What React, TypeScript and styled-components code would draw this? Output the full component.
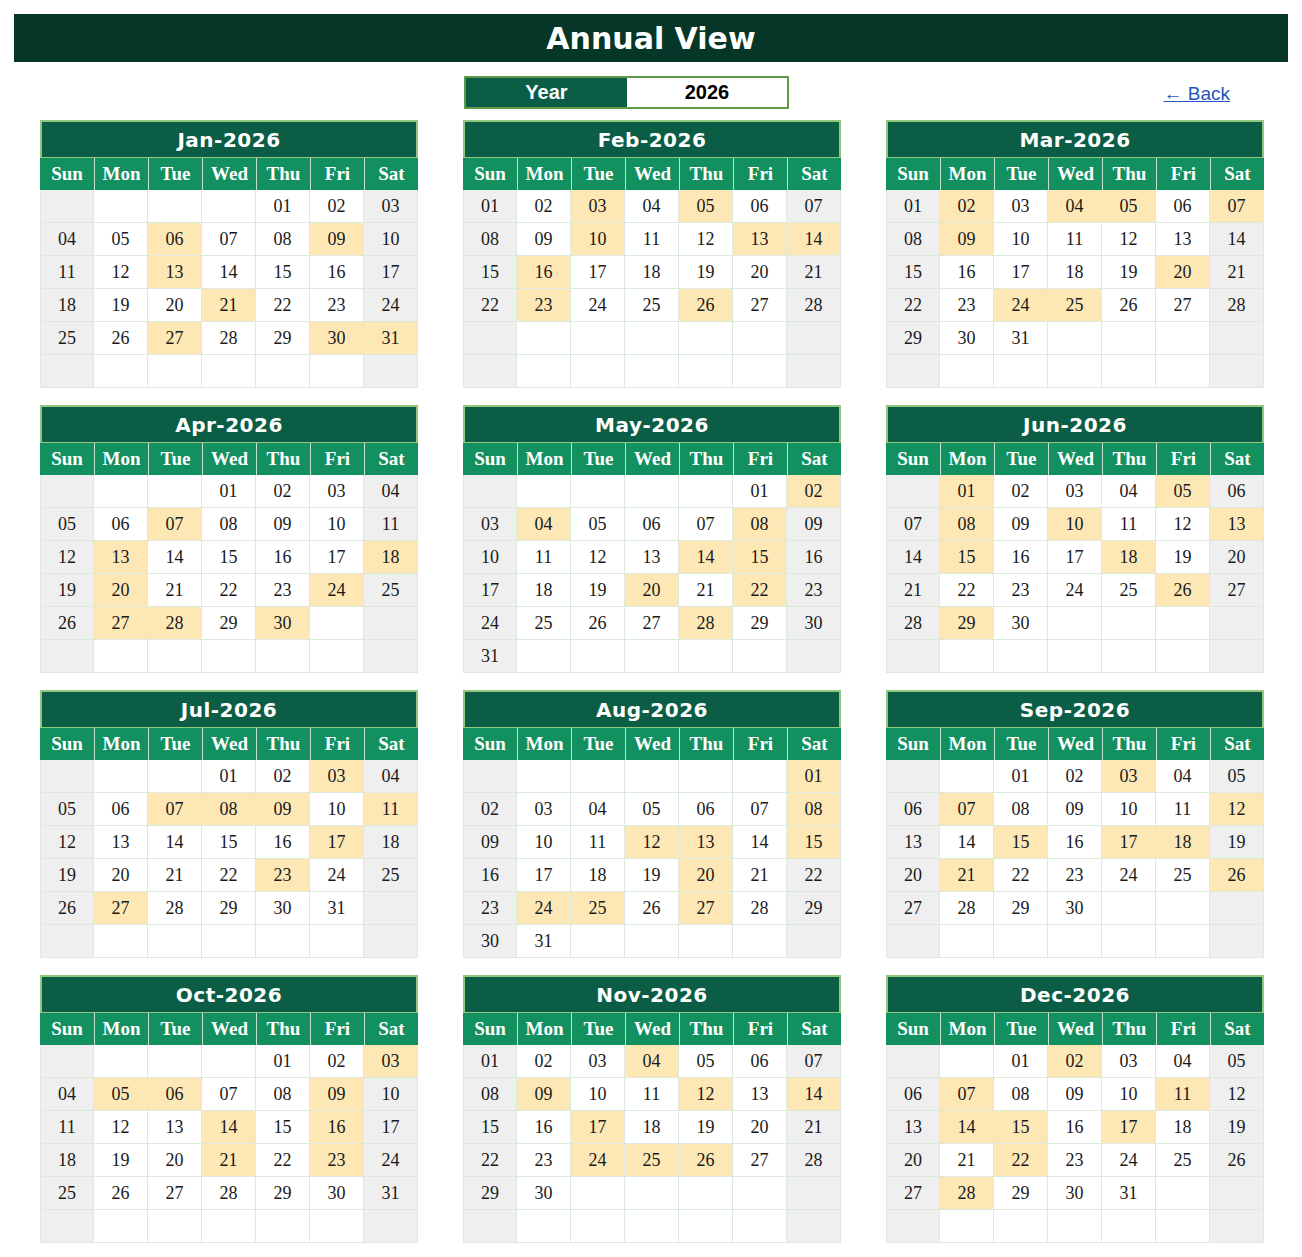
import React from "react";
import styled, { createGlobalStyle } from "styled-components";

const GlobalStyle = createGlobalStyle`
  html, body { margin: 0; padding: 0; background: #ffffff; }
  body { font-family: "Liberation Sans", Arial, sans-serif; }
`;

const Page = styled.div`
  width: 1302px;
  padding: 14px 0 0 0;
  box-sizing: border-box;
`;

const TitleBar = styled.header`
  margin: 0 14px;
  height: 48px;
  background: #053628;
  color: #ffffff;
  display: flex;
  align-items: center;
  justify-content: center;
  font-family: "DejaVu Sans", Verdana, sans-serif;
  font-weight: bold;
  font-size: 30px;
`;

const ControlRow = styled.div`
  position: relative;
  height: 58px;
  display: flex;
  align-items: center;
  padding-left: 464px;
`;

const YearBox = styled.div`
  display: flex;
  width: 325px;
  height: 33px;
  margin-top: 2px;
  box-sizing: border-box;
  border: 2px solid #5f9a4a;
`;

const YearLabel = styled.div`
  width: 161px;
  background: #0b5e45;
  color: #ffffff;
  display: flex;
  align-items: center;
  justify-content: center;
  font-weight: bold;
  font-size: 20px;
`;

const YearValue = styled.div`
  flex: 1;
  background: #ffffff;
  color: #000000;
  display: flex;
  align-items: center;
  justify-content: center;
  font-weight: bold;
  font-size: 20px;
`;

const BackLink = styled.a`
  position: absolute;
  right: 72px;
  top: 21px;
  color: #1f55c0;
  font-size: 19px;
  text-decoration: underline;
  cursor: pointer;
`;

const CalendarGrid = styled.div`
  display: grid;
  grid-template-columns: repeat(3, 378px);
  column-gap: 45px;
  row-gap: 17px;
  padding-left: 40px;
`;

const Card = styled.section`
  width: 378px;
  display: flex;
  flex-direction: column;
`;

const MonthTitle = styled.div`
  height: 38px;
  box-sizing: border-box;
  background: #0b5e45;
  border: 2px solid #93c77d;
  border-bottom-width: 1px;
  color: #ffffff;
  display: flex;
  align-items: center;
  justify-content: center;
  font-family: "Comic Sans MS", "DejaVu Sans", sans-serif;
  font-weight: bold;
  font-size: 20px;
  letter-spacing: 0.5px;
`;

const DayNames = styled.div`
  display: grid;
  grid-template-columns: repeat(7, 1fr);
  height: 32px;
  background: #13905f;
`;

const DayName = styled.div<{ $first?: boolean }>`
  display: flex;
  align-items: center;
  justify-content: center;
  color: #ffffff;
  font-family: "Liberation Serif", "Times New Roman", serif;
  font-weight: bold;
  font-size: 19px;
  border-left: ${(p) => (p.$first ? "none" : "1px solid #bfe3cc")};
`;

const Days = styled.div`
  display: grid;
  grid-template-columns: repeat(7, 54px);
  grid-auto-rows: 33px;
`;

const Cell = styled.div<{ $kind: "plain" | "weekend" | "hl" }>`
  box-sizing: border-box;
  border-right: 1px solid #dbeadb;
  border-bottom: 1px solid #dbeadb;
  &:nth-child(7n + 1) { border-left: 1px solid #dbeadb; }
  background: ${(p) =>
    p.$kind === "hl" ? "#fde8b5" : p.$kind === "weekend" ? "#efefef" : "#ffffff"};
  display: flex;
  align-items: center;
  justify-content: center;
  font-family: "Liberation Serif", "Times New Roman", serif;
  font-size: 18px;
  color: #1a1a1a;
`;

const MONTHS = ["Jan", "Feb", "Mar", "Apr", "May", "Jun", "Jul", "Aug", "Sep", "Oct", "Nov", "Dec"];
const WEEK = ["Sun", "Mon", "Tue", "Wed", "Thu", "Fri", "Sat"];

const HIGHLIGHTS: number[][] = [
  [6, 9, 13, 21, 27, 30, 31],
  [3, 5, 10, 13, 14, 16, 23, 26],
  [2, 4, 5, 7, 9, 20, 24, 25],
  [7, 13, 18, 20, 24, 27, 28, 30],
  [2, 4, 8, 14, 15, 20, 22, 28],
  [1, 5, 8, 10, 13, 15, 18, 26, 29],
  [3, 7, 8, 9, 11, 17, 23, 27],
  [1, 8, 12, 13, 15, 20, 24, 25, 27],
  [3, 7, 12, 15, 17, 18, 21, 26],
  [3, 5, 6, 9, 14, 16, 21, 23],
  [4, 9, 12, 14, 17, 24, 25, 26],
  [2, 7, 11, 14, 15, 17, 22, 28],
];

const YEAR = 2026;

function MonthCalendar({ month }: { month: number }) {
  const start = new Date(YEAR, month, 1).getDay();
  const count = new Date(YEAR, month + 1, 0).getDate();
  const hl = new Set(HIGHLIGHTS[month]);
  const cells = Array.from({ length: 42 }, (_, i) => {
    const d = i - start + 1;
    const day = d >= 1 && d <= count ? d : null;
    const col = i % 7;
    const kind: "plain" | "weekend" | "hl" =
      day !== null && hl.has(day) ? "hl" : col === 0 || col === 6 ? "weekend" : "plain";
    return { day, kind };
  });
  return (
    <Card>
      <MonthTitle>
        {MONTHS[month]}-{YEAR}
      </MonthTitle>
      <DayNames>
        {WEEK.map((w, i) => (
          <DayName key={w} $first={i === 0}>
            {w}
          </DayName>
        ))}
      </DayNames>
      <Days>
        {cells.map((c, i) => (
          <Cell key={i} $kind={c.kind}>
            {c.day !== null ? String(c.day).padStart(2, "0") : ""}
          </Cell>
        ))}
      </Days>
    </Card>
  );
}

export default function App() {
  return (
    <>
      <GlobalStyle />
      <Page>
        <TitleBar>Annual View</TitleBar>
        <ControlRow>
          <YearBox>
            <YearLabel>Year</YearLabel>
            <YearValue>{YEAR}</YearValue>
          </YearBox>
          <BackLink>← Back</BackLink>
        </ControlRow>
        <CalendarGrid>
          {MONTHS.map((_, m) => (
            <MonthCalendar key={m} month={m} />
          ))}
        </CalendarGrid>
      </Page>
    </>
  );
}
